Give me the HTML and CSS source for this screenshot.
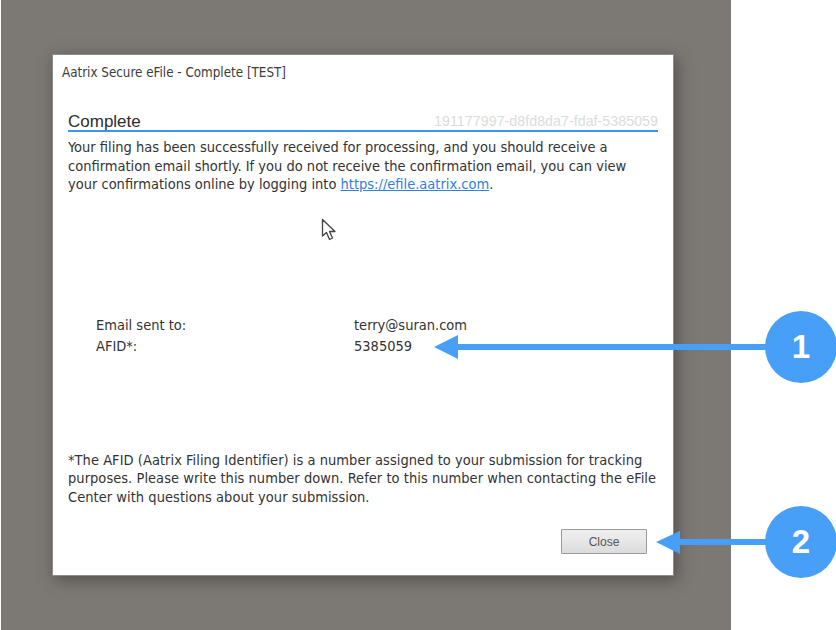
FILE: index.html
```html
<!DOCTYPE html>
<html lang="en">
<head>
<meta charset="utf-8">
<title>Aatrix Secure eFile - Complete [TEST]</title>
<link rel="stylesheet" href="styles.css">
</head>
<body>
<div class="page">
  <div class="backdrop">
    <div class="dialog">
      <div class="title">Aatrix Secure eFile - Complete [TEST]</div>
      <div class="heading">
        <span class="heading-text">Complete</span>
        <span class="ident">191177997-d8fd8da7-fdaf-5385059</span>
      </div>
      <p class="message">Your filing has been successfully received for processing, and you should receive a<br>confirmation email shortly. If you do not receive the confirmation email, you can view<br>your confirmations online by logging into <a class="link" href="#">https://efile.aatrix.com</a>.</p>
      <div class="details">
        <div>Email sent to:</div><div>terry@suran.com</div>
        <div>AFID*:</div><div>5385059</div>
      </div>
      <p class="note">*The AFID (Aatrix Filing Identifier) is a number assigned to your submission for tracking<br>purposes. Please write this number down. Refer to this number when contacting the eFile<br>Center with questions about your submission.</p>
      <div class="actions"><button class="close" type="button">Close</button></div>
    </div>
  </div>
  <svg class="cursor" width="16" height="24" viewBox="0 0 16 24" aria-hidden="true">
    <path d="M1.5 1.5V18L5.5 14.5L8.5 21.5L11.5 20L8.5 13.5H14Z" fill="#fff" stroke="#444" stroke-width="1.3" stroke-linejoin="round"/>
  </svg>
  <svg class="callouts" width="836" height="630" viewBox="0 0 836 630" aria-hidden="true">
    <rect x="456" y="344" width="312" height="6" fill="#479ff8"/>
    <path d="M434 347L458 335V359Z" fill="#479ff8"/>
    <circle cx="801" cy="347" r="36" fill="#479ff8"/>
    <rect x="678" y="539" width="90" height="6" fill="#479ff8"/>
    <path d="M656 542L680 531V554Z" fill="#479ff8"/>
    <circle cx="801" cy="542" r="36" fill="#479ff8"/>
  </svg>
  <span class="badge badge-one">1</span>
  <span class="badge badge-two">2</span>
</div>
</body>
</html>
```
FILE: styles.css
```css
html, body {
  margin: 0;
  padding: 0;
  background: #fff;
}
.page {
  position: relative;
  width: 836px;
  height: 630px;
  overflow: hidden;
  font-family: "DejaVu Sans Condensed", "DejaVu Sans", sans-serif;
  font-size: 14.5px;
  color: #333;
}
.backdrop {
  box-sizing: border-box;
  width: 730px;
  height: 630px;
  margin-left: 1px;
  padding: 54px 0 0 51px;
  background: #7c7874;
}
.dialog {
  box-sizing: border-box;
  width: 622px;
  height: 522px;
  padding: 10px 15px 0 15px;
  background: #fff;
  border: 1px solid #8f8d8b;
  box-shadow: 3px 4px 14px rgba(50, 48, 45, .55);
  display: flex;
  flex-direction: column;
}
.title {
  font-size: 13.3px;
  line-height: 15px;
  margin-left: -6px;
  color: #3c3c3c;
}
.heading {
  display: flex;
  justify-content: space-between;
  align-items: flex-end;
  margin-top: 31px;
  height: 19px;
  border-bottom: 2px solid #3f94f0;
}
.heading-text {
  font-family: "Liberation Sans", sans-serif;
  font-size: 17px;
  line-height: 16px;
  color: #2e2e2e;
}
.ident {
  font-family: "Liberation Sans", sans-serif;
  font-size: 14.3px;
  line-height: 18px;
  color: #dcdcdc;
}
.message {
  margin: 6px 0 0;
  line-height: 18.5px;
}
.link {
  color: #2f80e0;
}
.details {
  display: grid;
  grid-template-columns: 258px 1fr;
  margin: 121px 0 0 28px;
  line-height: 21px;
}
.note {
  margin: 94px 0 0;
  line-height: 18.5px;
  letter-spacing: .04px;
}
.actions {
  display: flex;
  justify-content: flex-end;
  margin: 23px 11px 0 0;
}
.close {
  box-sizing: border-box;
  width: 86px;
  height: 25px;
  padding: 0;
  font-family: "Liberation Sans", sans-serif;
  font-size: 12px;
  color: #555;
  background: linear-gradient(#f0f0f0, #dcdcdc);
  border: 1px solid #9a9a9a;
  border-radius: 1px;
}
.cursor {
  position: absolute;
  left: 321px;
  top: 218px;
}
.callouts {
  position: absolute;
  left: 0;
  top: 0;
}
.badge {
  position: absolute;
  left: 765px;
  width: 72px;
  height: 72px;
  text-align: center;
  font-family: "Liberation Sans", sans-serif;
  font-weight: 700;
  font-size: 33px;
  line-height: 72px;
  color: #fff;
}
.badge-one { top: 311px; }
.badge-two { top: 506px; }
```
